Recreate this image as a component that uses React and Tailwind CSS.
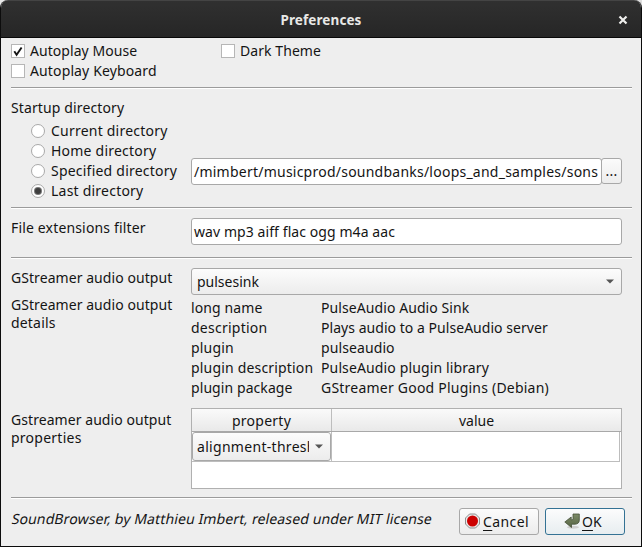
import React from "react";

function Separator() {
  return <div className="ml-2.5 h-0.5 w-[621px] shrink-0 border-t border-[#9b9b9b] bg-white" />;
}

function Check({ label, checked, className }) {
  return (
    <label className="flex h-5 items-center gap-[5px]">
      <span className="flex h-3.5 w-3.5 shrink-0 items-center justify-center border border-[#b6b6b6] bg-white">
        {checked && (
          <svg width="10" height="11" viewBox="0 0 10 11" fill="none" stroke="#151515">
            <path d="M1.3 5.3 L3.6 8.8 L8.6 1.5" strokeWidth="1.9" />
          </svg>
        )}
      </span>
      <span className={className}>{label}</span>
    </label>
  );
}

function Radio({ label, checked }) {
  return (
    <label className="flex h-5 items-center gap-1.5">
      <span className="flex h-3.5 w-3.5 shrink-0 items-center justify-center rounded-full border border-[#a9a9a9] bg-white">
        {checked && <span className="h-1.5 w-1.5 rounded-full bg-[#3d3d3d] ring-1 ring-[#777]" />}
      </span>
      <span className="tracking-[0.22px]">{label}</span>
    </label>
  );
}

function Arrow() {
  return (
    <svg width="8" height="5" viewBox="0 0 8 5" className="shrink-0">
      <path d="M0 0.5H8L4 4.5Z" fill="#555" />
    </svg>
  );
}

const details = [
  ["long name", "PulseAudio Audio Sink", "tracking-[0.12px]", "tracking-[0.08px]"],
  ["description", "Plays audio to a PulseAudio server", "tracking-[0.25px]", "tracking-[0.04px]"],
  ["plugin", "pulseaudio", "tracking-[0.2px]", "tracking-[0.1px]"],
  ["plugin description", "PulseAudio plugin library", "tracking-[0.18px]", "tracking-[0.13px]"],
  ["plugin package", "GStreamer Good Plugins (Debian)", "tracking-[0.08px]", "tracking-[0.22px]"],
];

export default function App() {
  return (
    <div className="h-[547px] w-[642px] overflow-hidden bg-[linear-gradient(90deg,#e8e8e8_50%,#dedede_50%)] font-['Noto_Sans',sans-serif] text-[14px] leading-[18px] whitespace-nowrap text-[#141414]">
      <div className="flex h-full flex-col overflow-hidden rounded-t-[8px] border-x border-b border-[#0c0c0c] bg-[#eeeeee]">
        <header className="flex h-[38px] shrink-0 items-center border-t border-b border-t-[#444] border-b-[#080808] bg-linear-to-b from-[#303030] to-[#262626] pt-px text-[#e8e8e6]">
          <div className="w-8" />
          <h1 className="flex-1 text-center text-[13.5px] font-bold tracking-[0.1px]">Preferences</h1>
          <div className="flex w-8 justify-center pr-[5px]">
            <svg width="10" height="10" viewBox="0 0 10 10" stroke="#eeeeec" strokeWidth="2.2">
              <path d="M1.5 1.5 L8.5 8.5 M8.5 1.5 L1.5 8.5" />
            </svg>
          </div>
        </header>

        <section className="flex h-[49px] shrink-0 pt-[3px] pl-2.5">
          <div className="w-[210px]">
            <Check label="Autoplay Mouse" className="tracking-[0.06px]" checked />
            <Check label="Autoplay Keyboard" className="tracking-[0.13px]" />
          </div>
          <Check label="Dark Theme" className="tracking-[0.07px]" />
        </section>
        <Separator />

        <section className="flex h-[118px] shrink-0 flex-col pt-[10px] pl-2.5">
          <div className="h-[21px] tracking-[0.12px]">Startup directory</div>
          <div className="flex">
            <div className="w-[180px] pl-5 pt-px">
              <Radio label="Current directory" />
              <Radio label="Home directory" />
              <Radio label="Specified directory" />
              <Radio label="Last directory" checked />
            </div>
            <div className="flex pt-[38px]">
              <div className="flex h-[27px] w-[411px] items-center overflow-hidden rounded-[3px] border border-[#a8a8a8] bg-white pl-0.5 tracking-[0.235px]">
                /mimbert/musicprod/soundbanks/loops_and_samples/sons
              </div>
              <div className="-ml-px flex h-[26px] w-[21px] items-center justify-center rounded-[3px] border border-[#a8a8a8] bg-linear-to-b from-[#fbfbfb] to-[#ededed] tracking-[0.3px]">...</div>
            </div>
          </div>
        </section>
        <Separator />

        <section className="flex h-12 shrink-0 pt-[9px] pl-2.5">
          <div className="w-[180px] pt-px tracking-[0.16px]">File extensions filter</div>
          <div className="flex h-[27px] w-[431px] items-center rounded-[3px] border border-[#a8a8a8] bg-white pl-0.5 tracking-[0.08px]">wav mp3 aiff flac ogg m4a aac</div>
        </section>
        <Separator />

        <section className="h-[238px] shrink-0 pt-[9px] pl-2.5">
          <div className="flex h-[30px]">
            <div className="w-[180px] pt-px tracking-[0.06px]">GStreamer audio output</div>
            <div className="flex h-[27px] w-[431px] items-center justify-between rounded-[3px] border border-[#a8a8a8] bg-linear-to-b from-[#fcfcfc] to-[#ececec] pr-[7px] pl-[5px]">
              <span>pulsesink</span>
              <Arrow />
            </div>
          </div>
          <div className="flex h-[110px]">
            <div className="-mt-0.5 w-[180px] tracking-[0.06px]">GStreamer audio output<br /><span className="tracking-[0.18px]">details</span></div>
            <dl className="grid h-[100px] grid-cols-[130px_auto] auto-rows-[20px] items-center">
              {details.map(([name, value, nameSpacing, valueSpacing]) => (
                <React.Fragment key={name}>
                  <dt className={nameSpacing}>{name}</dt>
                  <dd className={valueSpacing}>{value}</dd>
                </React.Fragment>
              ))}
            </dl>
          </div>
          <div className="flex">
            <div className="w-[180px] pt-[3px] tracking-[0.06px]">Gstreamer audio output<br /><span className="tracking-[0.25px]">properties</span></div>
            <div className="h-[81px] w-[431px] border border-[#b0b0b0] bg-white">
              <div className="flex h-[23px] border-b border-[#a8a8a8] bg-linear-to-b from-[#fafafa] to-[#e9e9e9] text-center leading-[24px]">
                <div className="w-[140px] border-r border-[#bdbdbd] tracking-[0.25px]">property</div>
                <div className="flex-1">value</div>
              </div>
              <div className="mr-px flex h-[30px] border-r border-b border-[#bdbdbd]">
                <div className="flex w-[140px] border-r border-[#bdbdbd]">
                  <div className="flex h-[29px] w-[139px] items-center justify-between rounded-[3px] border border-[#a8a8a8] bg-linear-to-b from-[#fcfcfc] to-[#ececec] pr-[7px] pl-1">
                    <span className="w-[112px] overflow-hidden tracking-[0.3px]">alignment-threshold</span>
                    <Arrow />
                  </div>
                </div>
              </div>
            </div>
          </div>
        </section>
        <Separator />

        <footer className="flex pt-[9px] pl-2.5">
          <div className="w-[448px] pt-0.5 pl-px"><span className="inline-block -skew-x-12 tracking-[0.12px]">SoundBrowser, by Matthieu Imbert, released under MIT license</span></div>
          <button className="flex h-[27px] w-20 items-center gap-1 rounded-[3px] border border-[#a8a8a8] bg-linear-to-b from-[#fcfcfc] to-[#ececec] pl-[5px]">
            <svg width="15" height="16" viewBox="0 0 15 16" className="mb-0.5 shrink-0">
              <path d="M4.5 1h6L14.5 5v6l-4 4h-6l-4-4V5Z" fill="#e9e9e9" stroke="#777" strokeWidth=".8" />
              <circle cx="7.5" cy="8" r="5.5" fill="#cc0000" />
            </svg>
            <span className="-ml-px tracking-[0.4px]"><span className="underline decoration-1 underline-offset-[3px]">C</span>ancel</span>
          </button>
          <button className="ml-1.5 flex h-[27px] w-20 items-center gap-0.5 rounded-[3px] border border-[#347294] bg-linear-to-b from-[#fcfcfc] to-[#e7edf0] pl-[18px]">
            <svg width="16" height="16" viewBox="0 0 16 16" className="mb-0.5 shrink-0">
              <defs>
                <linearGradient id="leaf" x1="0" y1="0" x2="0" y2="1">
                  <stop offset="0" stopColor="#7d8b68" />
                  <stop offset="1" stopColor="#566544" />
                </linearGradient>
              </defs>
              <ellipse cx="9" cy="14.3" rx="6" ry="1.5" fill="#cfcfcf" />
              <path d="M9 1H15.3V7Q15.3 11 11 11.2H7.5V14.5L.8 9L7.2 4V6.8H8Q9 6.8 9 5.8Z" fill="url(#leaf)" stroke="#465039" strokeWidth=".8" />
            </svg>
            <span><span className="underline decoration-1 underline-offset-[3px]">O</span>K</span>
          </button>
        </footer>
      </div>
    </div>
  );
}
